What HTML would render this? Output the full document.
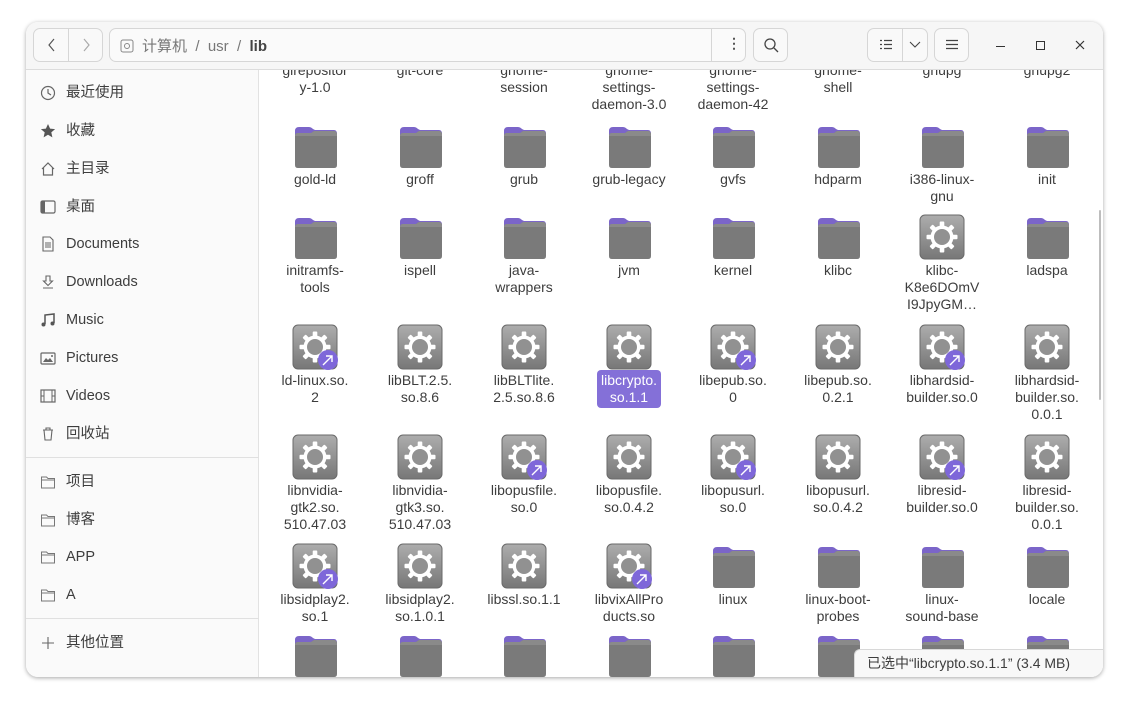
<!DOCTYPE html>
<html><head><meta charset="utf-8"><style>
*{box-sizing:border-box;margin:0;padding:0}
body{width:1129px;height:706px;background:#fff;position:relative;overflow:hidden;font-family:"Liberation Sans","Noto Sans CJK SC",sans-serif;color:#3d3d3d}
.win{position:absolute;left:26px;top:22px;width:1077px;height:655px;border-radius:12px;background:#fff;box-shadow:0 1px 4px rgba(0,0,0,.35);overflow:hidden}
.hdr{position:absolute;left:0;top:0;width:100%;height:48px;background:#f6f6f6;border-bottom:1px solid #dcdcdc;z-index:5}
.btn{position:absolute;border:1px solid #d6d6d6;border-radius:7px;background:#f9f9f9;height:34px;top:6px}
.side{position:absolute;left:0;top:48px;width:233px;height:607px;background:#fafafa;border-right:1px solid #e2e2e2}
.si{position:absolute;left:14px;font-size:14.5px;color:#3d3d3d;height:20px;line-height:20px;display:flex;align-items:center}
.si svg{width:16px;height:16px;margin-right:10px}
.sep{position:absolute;left:0;width:233px;height:1px;background:#e0e0e0}
.content{position:absolute;left:234px;top:48px;width:843px;height:607px;overflow:hidden;background:#fff}
.c{position:absolute;width:104px;text-align:center}
.c svg{display:block;margin:0 auto}
.l{font-size:14px;line-height:17px;color:#3d3d3d;margin-top:2px}
.sel{display:inline-block;background:#8470d8;color:#fff;border-radius:4px;padding:2px 4px}
.stat{position:absolute;right:0;bottom:0;width:249px;height:28px;background:#f8f8f8;border:1px solid #d8d8d8;border-right:none;border-bottom:none;border-top-left-radius:6px;font-size:14px;line-height:26px;padding-left:12px;color:#3d3d3d;z-index:6}
</style></head><body>
<svg width="0" height="0" style="position:absolute">
<defs>
<symbol id="fold" viewBox="0 0 46 44"><path d="M3 6 Q3 2 7 2 H17 Q19 2 21 4 L23 5 H42 Q45 5 45 9 V20 H3Z" fill="#7b65c9"/><path d="M3 11 Q3 8 6 8 H19 L22 6 H42 Q45 6 45 10 V40 Q45 43 42 43 H6 Q3 43 3 40Z" fill="#7a7a7a"/><path d="M3 11 Q3 8 6 8 H19 L22 6 H42 Q45 6 45 10 V11 H3Z" fill="#8a8a8a"/></symbol>
<linearGradient id="gg" x1="0" y1="0" x2="0" y2="1"><stop offset="0" stop-color="#adadad"/><stop offset="1" stop-color="#777"/></linearGradient>
<symbol id="gear" viewBox="0 0 46 46"><rect x="1" y="1" width="44" height="44" rx="5" fill="url(#gg)" stroke="#6a6a6a" stroke-width="1"/><g transform="translate(23 23)" fill="#fff"><circle r="11.5"/><g><rect x="-2.3" y="-15.5" width="4.6" height="31" rx="1"/><rect x="-2.3" y="-15.5" width="4.6" height="31" rx="1" transform="rotate(45)"/><rect x="-2.3" y="-15.5" width="4.6" height="31" rx="1" transform="rotate(90)"/><rect x="-2.3" y="-15.5" width="4.6" height="31" rx="1" transform="rotate(135)"/></g><circle r="8" fill="#919191"/></g></symbol>
<symbol id="gearl" viewBox="0 0 46 46"><use href="#gear"/><circle cx="36" cy="36" r="10" fill="#7e67d9"/><path d="M31 41 L40 32 M34 32 H40 V38" stroke="#fff" stroke-width="1.4" fill="none"/></symbol>
</defs></svg>
<div class="win">
 <div class="hdr">
  <div class="btn" style="left:7px;width:70px"><div style="position:absolute;left:34px;top:0;width:1px;height:32px;background:#d6d6d6"></div>
   <svg style="position:absolute;left:11px;top:9px" width="14" height="14"><path d="M9 1 L4 7 L9 13" stroke="#555" fill="none" stroke-width="1.2"/></svg>
   <svg style="position:absolute;left:45px;top:9px" width="14" height="14"><path d="M5 1 L10 7 L5 13" stroke="#aaa" fill="none" stroke-width="1.2"/></svg></div>
  <div class="btn" style="left:83px;width:637px;background:#fafafa">
   <svg style="position:absolute;left:10px;top:10px" width="14" height="14"><rect x="1" y="1" width="12" height="12" rx="2" stroke="#888" fill="none"/><circle cx="7" cy="7" r="2.5" stroke="#888" fill="none"/></svg>
   <div style="position:absolute;left:32px;top:6px;font-size:15px;color:#777">计算机 &nbsp;/&nbsp; usr &nbsp;/&nbsp; <b style="color:#444">lib</b></div>
   <div style="position:absolute;left:601px;top:0;width:1px;height:32px;background:#d6d6d6"></div>
   <div style="position:absolute;left:617px;top:6px;font-size:14px;color:#555;font-weight:bold">⋮</div></div>
  <div class="btn" style="left:727px;width:35px"><svg style="position:absolute;left:9px;top:8px" width="16" height="16"><circle cx="7" cy="7" r="5" stroke="#444" fill="none" stroke-width="1.3"/><path d="M11 11 L15 15" stroke="#444" stroke-width="1.3"/></svg></div>
  <div class="btn" style="left:841px;width:61px"><div style="position:absolute;left:34px;top:0;width:1px;height:32px;background:#d6d6d6"></div>
   <svg style="position:absolute;left:11px;top:10px" width="14" height="12"><path d="M1 1.5h2M1 5.5h2M1 9.5h2M5 1.5h8M5 5.5h8M5 9.5h8" stroke="#444" stroke-width="1.2"/></svg>
   <svg style="position:absolute;left:41px;top:12px" width="12" height="8"><path d="M1 1 L6 6 L11 1" stroke="#444" fill="none" stroke-width="1.1"/></svg></div>
  <div class="btn" style="left:908px;width:35px"><svg style="position:absolute;left:10px;top:10px" width="14" height="12"><path d="M1 1.5h12M1 5.5h12M1 9.5h12" stroke="#444" stroke-width="1.2"/></svg></div>
  <div style="position:absolute;left:970px;top:24px;width:9px;height:1px;background:#333"></div>
  <div style="position:absolute;left:1010px;top:19px;width:9px;height:9px;border:1.2px solid #333"></div>
  <svg style="position:absolute;left:1049px;top:18px" width="10" height="10"><path d="M1 1L9 9M9 1L1 9" stroke="#333" stroke-width="1.2"/></svg>
 </div>
 <div class="side">
  <div class="si" style="top:13px"><svg viewBox="0 0 16 16"><circle cx="8" cy="8" r="6.5" stroke="#666" fill="none" stroke-width="1.2"/><path d="M8 4v4l3 2" stroke="#666" fill="none" stroke-width="1.2"/></svg>最近使用</div>
  <div class="si" style="top:51px"><svg viewBox="0 0 16 16"><path d="M8 1l2.1 4.6 5 .5-3.8 3.3 1.1 5L8 11.8 3.6 14.4l1.1-5L.9 6.1l5-.5z" fill="#555"/></svg>收藏</div>
  <div class="si" style="top:89px"><svg viewBox="0 0 16 16"><path d="M2 8L8 2l6 6M3.5 6.5V14h9V6.5" stroke="#666" fill="none" stroke-width="1.2"/></svg>主目录</div>
  <div class="si" style="top:127px"><svg viewBox="0 0 16 16"><rect x="1" y="2" width="14" height="12" rx="1.5" stroke="#666" fill="none" stroke-width="1.2"/><rect x="1" y="2" width="4" height="12" fill="#666"/></svg>桌面</div>
  <div class="si" style="top:164px"><svg viewBox="0 0 16 16"><path d="M3 1h7l3 3v11H3z" stroke="#666" fill="none" stroke-width="1.1"/><path d="M5 7h6M5 9h6M5 11h6" stroke="#666"/></svg>Documents</div>
  <div class="si" style="top:202px"><svg viewBox="0 0 16 16"><path d="M6 2h4v5h2.5L8 11.5 3.5 7H6zM3 14h10" stroke="#666" fill="none" stroke-width="1.1"/></svg>Downloads</div>
  <div class="si" style="top:240px"><svg viewBox="0 0 16 16"><path d="M5 12V3l9-1v9" stroke="#555" fill="none" stroke-width="1.5"/><circle cx="3.5" cy="12.5" r="2" fill="#555"/><circle cx="12.5" cy="11.5" r="2" fill="#555"/></svg>Music</div>
  <div class="si" style="top:278px"><svg viewBox="0 0 16 16"><rect x="1" y="3" width="14" height="11" rx="1" stroke="#666" fill="none" stroke-width="1.2"/><path d="M3 12l3-4 2 2 2-2 3 4z" fill="#666"/><circle cx="12" cy="6" r="1" fill="#666"/></svg>Pictures</div>
  <div class="si" style="top:316px"><svg viewBox="0 0 16 16"><rect x="1" y="2" width="14" height="12" stroke="#666" fill="none" stroke-width="1.2"/><path d="M4 2v12M12 2v12M1 8h3M12 8h3" stroke="#666"/></svg>Videos</div>
  <div class="si" style="top:354px"><svg viewBox="0 0 16 16"><path d="M3 4h10M6 4V2h4v2M4 4l1 10h6l1-10" stroke="#666" fill="none" stroke-width="1.1"/></svg>回收站</div>
  <div class="sep" style="top:387px"></div>
  <div class="si" style="top:402px"><svg viewBox="0 0 16 16"><path d="M1.5 3h5l1.5 1.5h6.5v9.5h-13z M1.5 6h13" stroke="#777" fill="none" stroke-width="1"/></svg>项目</div>
  <div class="si" style="top:440px"><svg viewBox="0 0 16 16"><path d="M1.5 3h5l1.5 1.5h6.5v9.5h-13z M1.5 6h13" stroke="#777" fill="none" stroke-width="1"/></svg>博客</div>
  <div class="si" style="top:477px"><svg viewBox="0 0 16 16"><path d="M1.5 3h5l1.5 1.5h6.5v9.5h-13z M1.5 6h13" stroke="#777" fill="none" stroke-width="1"/></svg>APP</div>
  <div class="si" style="top:515px"><svg viewBox="0 0 16 16"><path d="M1.5 3h5l1.5 1.5h6.5v9.5h-13z M1.5 6h13" stroke="#777" fill="none" stroke-width="1"/></svg>A</div>
  <div class="sep" style="top:548px"></div>
  <div class="si" style="top:563px"><svg viewBox="0 0 16 16"><path d="M8 2v12M2 8h12" stroke="#666" stroke-width="1.1"/></svg>其他位置</div>
 </div>
 <div class="content">
  <div class="c" style="left:3px;top:-8px"><div class="l" style="margin:0">girepositor<br>y-1.0</div></div>
  <div class="c" style="left:108px;top:-8px"><div class="l" style="margin:0">git-core</div></div>
  <div class="c" style="left:212px;top:-8px"><div class="l" style="margin:0">gnome-<br>session</div></div>
  <div class="c" style="left:317px;top:-8px"><div class="l" style="margin:0">gnome-<br>settings-<br>daemon-3.0</div></div>
  <div class="c" style="left:421px;top:-8px"><div class="l" style="margin:0">gnome-<br>settings-<br>daemon-42</div></div>
  <div class="c" style="left:526px;top:-8px"><div class="l" style="margin:0">gnome-<br>shell</div></div>
  <div class="c" style="left:630px;top:-8px"><div class="l" style="margin:0">gnupg</div></div>
  <div class="c" style="left:735px;top:-8px"><div class="l" style="margin:0">gnupg2</div></div>
  <!-- row1 -->
  <div class="c" style="left:3px;top:55px"><svg width="46" height="44"><use href="#fold"/></svg><div class="l">gold-ld</div></div>
  <div class="c" style="left:108px;top:55px"><svg width="46" height="44"><use href="#fold"/></svg><div class="l">groff</div></div>
  <div class="c" style="left:212px;top:55px"><svg width="46" height="44"><use href="#fold"/></svg><div class="l">grub</div></div>
  <div class="c" style="left:317px;top:55px"><svg width="46" height="44"><use href="#fold"/></svg><div class="l">grub-legacy</div></div>
  <div class="c" style="left:421px;top:55px"><svg width="46" height="44"><use href="#fold"/></svg><div class="l">gvfs</div></div>
  <div class="c" style="left:526px;top:55px"><svg width="46" height="44"><use href="#fold"/></svg><div class="l">hdparm</div></div>
  <div class="c" style="left:630px;top:55px"><svg width="46" height="44"><use href="#fold"/></svg><div class="l">i386-linux-<br>gnu</div></div>
  <div class="c" style="left:735px;top:55px"><svg width="46" height="44"><use href="#fold"/></svg><div class="l">init</div></div>
  <!-- row2 -->
  <div class="c" style="left:3px;top:146px"><svg width="46" height="44"><use href="#fold"/></svg><div class="l">initramfs-<br>tools</div></div>
  <div class="c" style="left:108px;top:146px"><svg width="46" height="44"><use href="#fold"/></svg><div class="l">ispell</div></div>
  <div class="c" style="left:212px;top:146px"><svg width="46" height="44"><use href="#fold"/></svg><div class="l">java-<br>wrappers</div></div>
  <div class="c" style="left:317px;top:146px"><svg width="46" height="44"><use href="#fold"/></svg><div class="l">jvm</div></div>
  <div class="c" style="left:421px;top:146px"><svg width="46" height="44"><use href="#fold"/></svg><div class="l">kernel</div></div>
  <div class="c" style="left:526px;top:146px"><svg width="46" height="44"><use href="#fold"/></svg><div class="l">klibc</div></div>
  <div class="c" style="left:630px;top:146px"><svg width="46" height="46" style="margin-top:-2px"><use href="#gear"/></svg><div class="l">klibc-<br>K8e6DOmV<br>I9JpyGM…</div></div>
  <div class="c" style="left:735px;top:146px"><svg width="46" height="44"><use href="#fold"/></svg><div class="l">ladspa</div></div>
  <!-- row3 -->
  <div class="c" style="left:3px;top:254px"><svg width="46" height="46"><use href="#gearl"/></svg><div class="l">ld-linux.so.<br>2</div></div>
  <div class="c" style="left:108px;top:254px"><svg width="46" height="46"><use href="#gear"/></svg><div class="l">libBLT.2.5.<br>so.8.6</div></div>
  <div class="c" style="left:212px;top:254px"><svg width="46" height="46"><use href="#gear"/></svg><div class="l">libBLTlite.<br>2.5.so.8.6</div></div>
  <div class="c" style="left:317px;top:254px"><svg width="46" height="46"><use href="#gear"/></svg><div class="l" style="margin-top:0"><span class="sel">libcrypto.<br>so.1.1</span></div></div>
  <div class="c" style="left:421px;top:254px"><svg width="46" height="46"><use href="#gearl"/></svg><div class="l">libepub.so.<br>0</div></div>
  <div class="c" style="left:526px;top:254px"><svg width="46" height="46"><use href="#gear"/></svg><div class="l">libepub.so.<br>0.2.1</div></div>
  <div class="c" style="left:630px;top:254px"><svg width="46" height="46"><use href="#gearl"/></svg><div class="l">libhardsid-<br>builder.so.0</div></div>
  <div class="c" style="left:735px;top:254px"><svg width="46" height="46"><use href="#gear"/></svg><div class="l">libhardsid-<br>builder.so.<br>0.0.1</div></div>
  <!-- row4 -->
  <div class="c" style="left:3px;top:364px"><svg width="46" height="46"><use href="#gear"/></svg><div class="l">libnvidia-<br>gtk2.so.<br>510.47.03</div></div>
  <div class="c" style="left:108px;top:364px"><svg width="46" height="46"><use href="#gear"/></svg><div class="l">libnvidia-<br>gtk3.so.<br>510.47.03</div></div>
  <div class="c" style="left:212px;top:364px"><svg width="46" height="46"><use href="#gearl"/></svg><div class="l">libopusfile.<br>so.0</div></div>
  <div class="c" style="left:317px;top:364px"><svg width="46" height="46"><use href="#gear"/></svg><div class="l">libopusfile.<br>so.0.4.2</div></div>
  <div class="c" style="left:421px;top:364px"><svg width="46" height="46"><use href="#gearl"/></svg><div class="l">libopusurl.<br>so.0</div></div>
  <div class="c" style="left:526px;top:364px"><svg width="46" height="46"><use href="#gear"/></svg><div class="l">libopusurl.<br>so.0.4.2</div></div>
  <div class="c" style="left:630px;top:364px"><svg width="46" height="46"><use href="#gearl"/></svg><div class="l">libresid-<br>builder.so.0</div></div>
  <div class="c" style="left:735px;top:364px"><svg width="46" height="46"><use href="#gear"/></svg><div class="l">libresid-<br>builder.so.<br>0.0.1</div></div>
  <!-- row5 -->
  <div class="c" style="left:3px;top:473px"><svg width="46" height="46"><use href="#gearl"/></svg><div class="l">libsidplay2.<br>so.1</div></div>
  <div class="c" style="left:108px;top:473px"><svg width="46" height="46"><use href="#gear"/></svg><div class="l">libsidplay2.<br>so.1.0.1</div></div>
  <div class="c" style="left:212px;top:473px"><svg width="46" height="46"><use href="#gear"/></svg><div class="l">libssl.so.1.1</div></div>
  <div class="c" style="left:317px;top:473px"><svg width="46" height="46"><use href="#gearl"/></svg><div class="l">libvixAllPro<br>ducts.so</div></div>
  <div class="c" style="left:421px;top:473px"><svg width="46" height="46" viewBox="0 -1 46 46"><use href="#fold"/></svg><div class="l">linux</div></div>
  <div class="c" style="left:526px;top:473px"><svg width="46" height="46" viewBox="0 -1 46 46"><use href="#fold"/></svg><div class="l">linux-boot-<br>probes</div></div>
  <div class="c" style="left:630px;top:473px"><svg width="46" height="46" viewBox="0 -1 46 46"><use href="#fold"/></svg><div class="l">linux-<br>sound-base</div></div>
  <div class="c" style="left:735px;top:473px"><svg width="46" height="46" viewBox="0 -1 46 46"><use href="#fold"/></svg><div class="l">locale</div></div>
  <!-- row6 -->
  <div class="c" style="left:3px;top:564px"><svg width="46" height="44"><use href="#fold"/></svg></div>
  <div class="c" style="left:108px;top:564px"><svg width="46" height="44"><use href="#fold"/></svg></div>
  <div class="c" style="left:212px;top:564px"><svg width="46" height="44"><use href="#fold"/></svg></div>
  <div class="c" style="left:317px;top:564px"><svg width="46" height="44"><use href="#fold"/></svg></div>
  <div class="c" style="left:421px;top:564px"><svg width="46" height="44"><use href="#fold"/></svg></div>
  <div class="c" style="left:526px;top:564px"><svg width="46" height="44"><use href="#fold"/></svg></div>
  <div class="c" style="left:630px;top:564px"><svg width="46" height="44"><use href="#fold"/></svg></div>
  <div class="c" style="left:735px;top:564px"><svg width="46" height="44"><use href="#fold"/></svg></div>
  <div style="position:absolute;left:839px;top:140px;width:2px;height:190px;background:#bdbdbd;border-radius:1px"></div>
 </div>
 <div class="stat">已选中“libcrypto.so.1.1” (3.4 MB)</div>
</div>
</body></html>
